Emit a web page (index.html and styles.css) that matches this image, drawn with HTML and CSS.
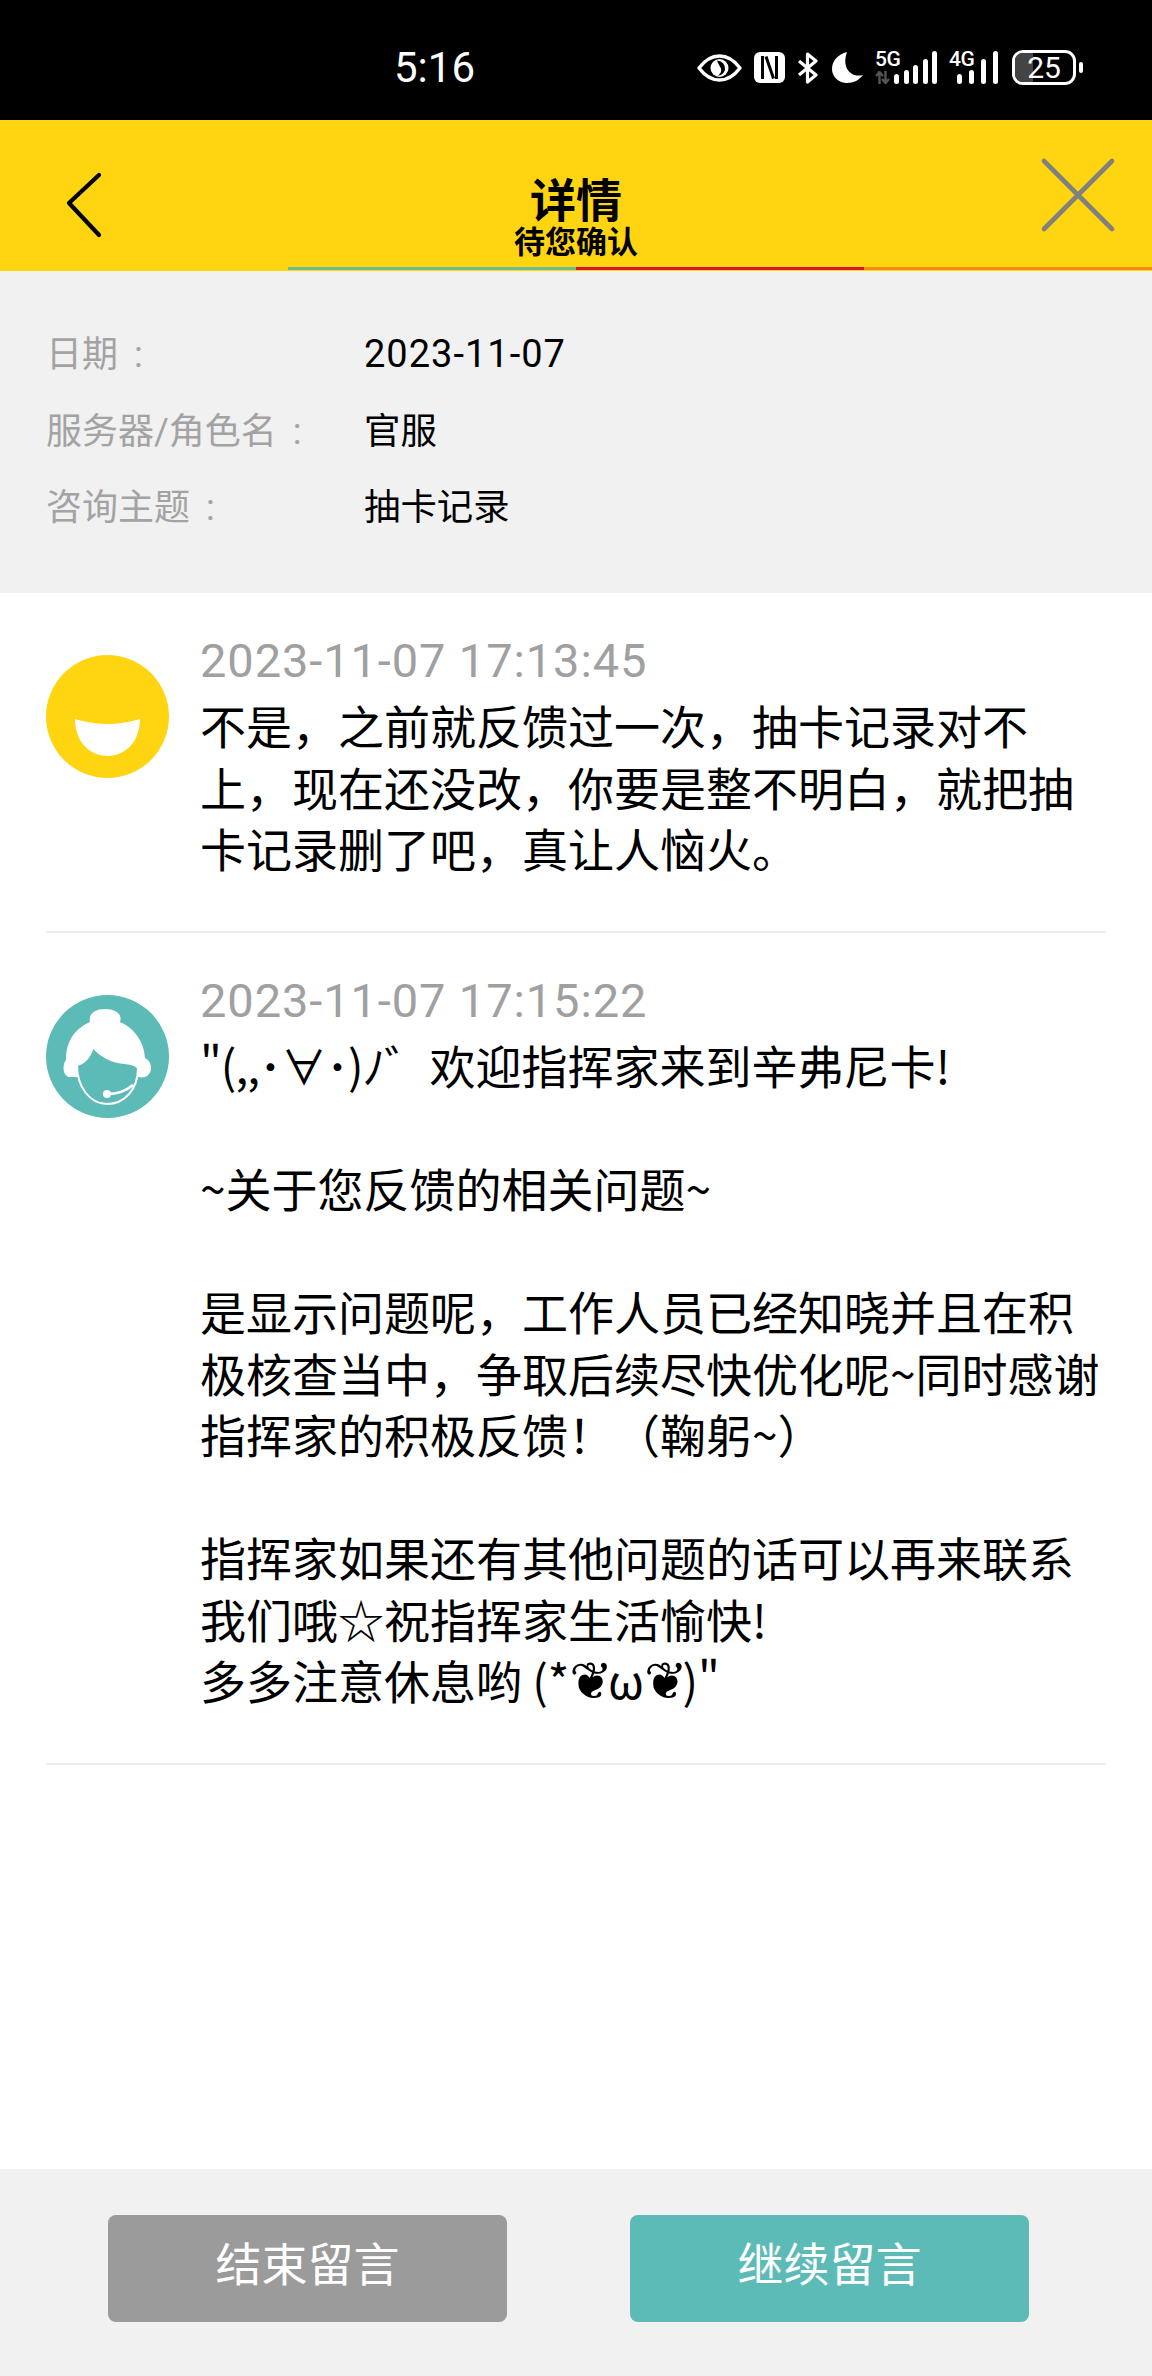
FILE: index.html
```html
<!DOCTYPE html>
<html lang="zh-CN">
<head>
    <meta charset="UTF-8">
    <meta name="viewport" content="width=device-width, initial-scale=1.0">
    <title>详情</title>
    <link rel="stylesheet" href="styles.css">
</head>
<body>
<div class="page">

    <div class="status-bar">
        <span class="clock">5:16</span>
        <div class="status-icons">
            <svg class="ic-eye" width="45" height="28" viewBox="0 0 45 28">
                <path d="M2 14C8 6 15 2 22.5 2S37 6 43 14c-6 8-13 12-20.5 12S8 22 2 14z" fill="none" stroke="#fff" stroke-width="3.4" stroke-linejoin="round"/>
                <circle cx="22.5" cy="14" r="9" fill="#fff"/>
                <path d="M20 6.500a8 8 0 0 1 8 9c-1 4-4 6-7 6c3-2 4-5 2.500-8c-1-2-2-3-3.500-7z" fill="#000"/>
            </svg>
            <svg class="ic-nfc" width="31" height="31" viewBox="0 0 31 31">
                <rect width="31" height="31" rx="6" fill="#fff"/>
                <path d="M8.500 4v23M22.500 4v23M12 4.500l7.500 22" fill="none" stroke="#000" stroke-width="3"/>
            </svg>
            <svg class="ic-bt" width="21" height="32" viewBox="0 0 21 32">
                <path d="M2 9l17 14l-8.500 7V2L19 9L2 23" fill="none" stroke="#fff" stroke-width="3.200" stroke-linejoin="round"/>
            </svg>
            <svg class="ic-moon" width="31" height="31" viewBox="0 0 31 31">
                <path d="M15 0C6 2 0 9 0 17c0 8 7 14 15 14c7 0 12-3 16-8C20 26 9 17 15 0z" fill="#fff"/>
            </svg>
            <div class="signal sig-5g">
                <span class="net">5G</span>
                <svg class="arrows" width="15" height="13" viewBox="0 0 15 13">
                    <path d="M4.500 13V2M1 5l3.500-4L8 5M10.500 0v11M7 8l3.500 4L14 8" fill="none" stroke="#555" stroke-width="2.400"/>
                </svg>
                <div class="bars"><i class="b1"></i><i class="b2"></i><i class="b3"></i><i class="b4"></i><i class="b5"></i></div>
            </div>
            <div class="signal sig-4g">
                <span class="net">4G</span>
                <div class="bars"><i class="b1"></i><i class="b2"></i><i class="b4"></i><i class="b5"></i></div>
            </div>
            <div class="battery">
                <div class="batt-body">
                    <div class="batt-fill"></div>
                    <span class="batt-num">25</span>
                </div>
                <div class="batt-tip"></div>
            </div>
        </div>
    </div>

    <header class="top-bar">
        <svg class="back" width="36" height="68" viewBox="0 0 36 68">
            <path d="M33 3L3 31l30 32" fill="none" stroke="#000" stroke-width="4.200" stroke-linecap="round" stroke-linejoin="round"/>
        </svg>
        <div class="title-wrap">
            <h1>详情</h1>
            <p class="subtitle">待您确认</p>
        </div>
        <svg class="close" width="76" height="76" viewBox="0 0 76 76">
            <path d="M4 4l68 68M72 4L4 72" fill="none" stroke="#808080" stroke-width="4.600" stroke-linecap="round"/>
        </svg>
        <div class="progress">
            <span class="seg seg-green"></span>
            <span class="seg seg-red"></span>
            <span class="seg seg-orange"></span>
        </div>
    </header>

    <section class="info">
        <div class="info-row"><span class="info-label">日期<span class="colon">:</span></span><span class="info-value info-date">2023-11-07</span></div>
        <div class="info-row"><span class="info-label">服务器/角色名<span class="colon">:</span></span><span class="info-value">官服</span></div>
        <div class="info-row"><span class="info-label">咨询主题<span class="colon">:</span></span><span class="info-value">抽卡记录</span></div>
    </section>

    <main class="messages">
        <article class="msg msg-user">
            <svg class="avatar" width="123" height="123" viewBox="0 0 123 123">
                <circle cx="61.500" cy="61.500" r="61.500" fill="#ffd411"/>
                <path d="M29 64Q61.500 74 94 64c0 22-14 37-32.500 37S29 86 29 64z" fill="#fff"/>
            </svg>
            <div class="msg-body">
                <div class="msg-time">2023-11-07 17:13:45</div>
                <div class="msg-text">不是，之前就反馈过一次，抽卡记录对不<br>上，现在还没改，你要是整不明白，就把抽<br>卡记录删了吧，真让人恼火。</div>
            </div>
        </article>
        <article class="msg msg-staff">
            <svg class="avatar" width="123" height="123" viewBox="0 0 123 123">
                <circle cx="61.500" cy="61.500" r="61.500" fill="#5cbbb6"/>
                <path d="M44 27C42 18 50 14 59 14C68 14 77 18 74 27C88 33 98 46 99 63C105 66 107 74 103 79C101 82 97 83 93 82L25 82C18 83 15 72 20 65C20 45 30 33 44 27z" fill="#fff"/>
                <path d="M31 70C39 68 44 62 47 52C54 61 66 67 79 68C86 69 90 70 92 73C92 95 78 109 61 109C44 109 31 92 31 70z" fill="#5cbbb6" stroke="#fff" stroke-width="2"/>
                <path d="M87 90C80 96 72 99 61 99" fill="none" stroke="#fff" stroke-width="2.400"/>
                <circle cx="61" cy="99" r="4" fill="#fff"/>
            </svg>
            <div class="msg-body">
                <div class="msg-time">2023-11-07 17:15:22</div>
                <div class="msg-text"><span class="kaomoji">"(,,･∀･)ﾉ゛</span>欢迎指挥家来到辛弗尼卡!<br><br>~关于您反馈的相关问题~<br><br>是显示问题呢，工作人员已经知晓并且在积<br>极核查当中，争取后续尽快优化呢~同时感谢<br>指挥家的积极反馈！（鞠躬~）<br><br>指挥家如果还有其他问题的话可以再来联系<br>我们哦☆祝指挥家生活愉快!<br>多多注意休息哟 (*<span class="heart">❦</span>ω<span class="heart">❦</span>)"</div>
            </div>
        </article>
    </main>

    <footer class="actions">
        <button class="btn btn-end">结束留言</button>
        <button class="btn btn-go">继续留言</button>
    </footer>

</div>
</body>
</html>
```

FILE: styles.css
```css
* {
    box-sizing: border-box;
}
html, body {
    margin: 0;
    padding: 0;
    background-color: #fff;
}
body {
    font-family: "Roboto", "Noto Sans CJK SC", sans-serif;
    color: #000;
}
.page {
    width: 1152px;
    height: 2376px;
    display: flex;
    flex-direction: column;
    overflow: hidden;
}

/* status bar */
.status-bar {
    height: 120px;
    flex: none;
    display: flex;
    align-items: center;
    padding: 15px 69px 0 394px;
    background-color: #000;
    color: #fff;
}
.clock {
    font-size: 42px;
    line-height: 50px;
}
.status-icons {
    margin-left: auto;
    display: flex;
    align-items: center;
    gap: 12px;
}
.ic-moon {
    margin-left: 2px;
}
.signal {
    position: relative;
    height: 33px;
    flex: none;
}
.sig-5g { width: 62px; }
.sig-4g { width: 49px; }
.net {
    position: absolute;
    left: 0;
    top: -1px;
    font-size: 21px;
    font-weight: 500;
    line-height: 18px;
    letter-spacing: -0.5px;
}
.arrows {
    position: absolute;
    left: 0;
    bottom: 0;
}
.bars {
    position: absolute;
    right: 0;
    bottom: 0;
    display: flex;
    align-items: flex-end;
    gap: 4.5px;
}
.sig-4g .bars {
    gap: 7px;
}
.bars i {
    display: block;
    width: 5px;
    border-radius: 2.5px;
    background-color: #fff;
}
.b1 { height: 10px; }
.b2 { height: 14px; }
.b3 { height: 19px; }
.b4 { height: 25px; }
.b5 { height: 33px; }
.battery {
    display: flex;
    align-items: center;
    margin-left: 2px;
}
.batt-body {
    position: relative;
    width: 64px;
    height: 35px;
    border: 3px solid #fff;
    border-radius: 11px;
    overflow: hidden;
}
.batt-fill {
    position: absolute;
    left: 0;
    top: 0;
    bottom: 0;
    width: 18px;
    background-color: #444;
}
.batt-num {
    position: relative;
    display: block;
    text-align: center;
    font-size: 30px;
    line-height: 29px;
}
.batt-tip {
    width: 4px;
    height: 11px;
    margin-left: 3px;
    border-radius: 2px;
    background-color: #fff;
}

/* yellow bar */
.top-bar {
    position: relative;
    height: 151px;
    flex: none;
    display: flex;
    justify-content: center;
    background-color: #ffd411;
}
.back {
    position: absolute;
    left: 66px;
    top: 52px;
}
.close {
    position: absolute;
    left: 1040px;
    top: 37px;
}
.title-wrap {
    padding-top: 59px;
    text-align: center;
}
.top-bar h1 {
    margin: 0;
    font-size: 46px;
    font-weight: 700;
    line-height: 44px;
}
.subtitle {
    margin: 5px 0 0;
    font-size: 31px;
    font-weight: 700;
    line-height: 30px;
}
.progress {
    position: absolute;
    left: 288px;
    right: 0;
    bottom: 1px;
    display: flex;
    height: 3px;
}
.seg {
    flex: 1;
}
.seg-green { background-color: #6fb98f; }
.seg-red { background-color: #d2172e; }
.seg-orange { background-color: #f28c0f; }

/* info block */
.info {
    height: 322px;
    flex: none;
    padding-top: 42px;
    background-color: #f1f1f1;
}
.info-row {
    display: flex;
    align-items: center;
    height: 76.5px;
    font-size: 36px;
}
.info-label {
    width: 364px;
    padding-left: 46px;
    color: #a3a3a3;
}
.colon {
    margin-left: 16px;
}
.info-value {
    font-size: 36.4px;
}
.info-date {
    padding-top: 6px;
    font-size: 38px;
    letter-spacing: 1px;
}

/* messages */
.messages {
    flex: 1;
    padding: 0 46px;
}
.msg {
    display: flex;
    align-items: flex-start;
    padding-top: 62px;
    border-bottom: 2px solid #ececec;
}
.msg-user { height: 340px; }
.msg-staff { height: 832px; }
.avatar {
    flex: none;
}
.msg-body {
    margin-left: 31px;
    margin-top: -26px;
}
.msg-time {
    margin-bottom: 1px;
    font-size: 47px;
    line-height: 64px;
    letter-spacing: 0.9px;
    color: #a0a0a0;
}
.msg-text {
    font-family: "Noto Sans CJK SC", sans-serif;
    font-size: 46px;
    line-height: 61.5px;
    white-space: nowrap;
}
.kaomoji {
    letter-spacing: -1px;
}
.heart {
    font-family: "DejaVu Sans", sans-serif;
    font-size: 52px;
    line-height: 0;
    letter-spacing: -5px;
}

/* bottom buttons */
.actions {
    height: 207px;
    flex: none;
    display: flex;
    justify-content: space-between;
    padding: 46px 123px 0 108px;
    background-color: #f1f1f1;
}
.btn {
    width: 399px;
    height: 107px;
    padding: 0 0 16px;
    border: none;
    border-radius: 8px;
    color: #fff;
    font-family: inherit;
    font-size: 46px;
}
.btn-end { background-color: #9b9b9b; }
.btn-go { background-color: #5cbbb6; }
```
